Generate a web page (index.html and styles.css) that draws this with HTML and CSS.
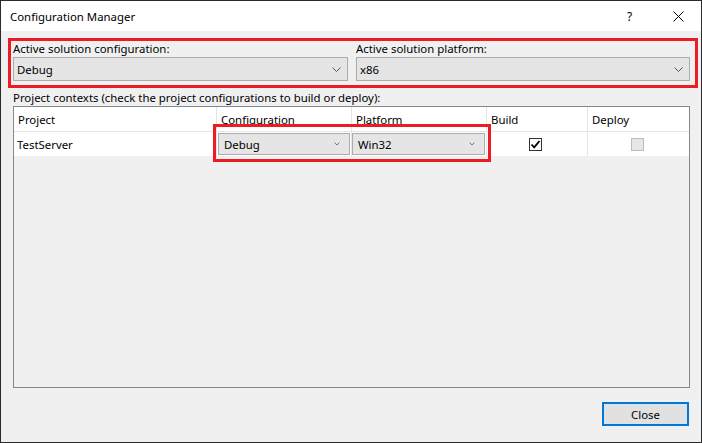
FILE: index.html
```html
<!DOCTYPE html>
<html>
<head>
<meta charset="utf-8">
<link rel="stylesheet" href="styles.css">
</head>
<body>
<div class="window">
  <div class="titlebar">
    <span class="title">Configuration Manager</span>
    <span class="tb-help">?</span>
    <span class="tb-close"><svg width="11" height="11" viewBox="0 0 11 11"><path d="M0.5 0.5 L10.5 10.5 M10.5 0.5 L0.5 10.5" stroke="#000" stroke-width="1" fill="none"/></svg></span>
  </div>
  <div class="content">
    <div class="active-box">
      <div class="field">
        <div class="label">Active solution configuration:</div>
        <div class="combo"><span>Debug</span><svg class="chev" width="9" height="5" viewBox="0 0 9 5"><path d="M0.5 0.5 L4.5 4.5 L8.5 0.5" stroke="#555" fill="none"/></svg></div>
      </div>
      <div class="field">
        <div class="label">Active solution platform:</div>
        <div class="combo"><span>x86</span><svg class="chev" width="9" height="5" viewBox="0 0 9 5"><path d="M0.5 0.5 L4.5 4.5 L8.5 0.5" stroke="#555" fill="none"/></svg></div>
      </div>
    </div>
    <div class="label contexts">Project contexts (check the project configurations to build or deploy):</div>
    <div class="grid-box">
      <div class="row header">
        <div class="cell">Project</div>
        <div class="cell">Configuration</div>
        <div class="cell">Platform</div>
        <div class="cell">Build</div>
        <div class="cell">Deploy</div>
      </div>
      <div class="row data">
        <div class="cell">TestServer</div>
        <div class="cell combo-cell"><div class="mini-combo cfg"><span>Debug</span><svg class="mchev" width="6" height="4" viewBox="0 0 6 4"><path d="M0.5 0.5 L3 3 L5.5 0.5" stroke="#777" fill="none"/></svg></div></div>
        <div class="cell combo-cell"><div class="mini-combo plat"><span>Win32</span><svg class="mchev" width="6" height="4" viewBox="0 0 6 4"><path d="M0.5 0.5 L3 3 L5.5 0.5" stroke="#777" fill="none"/></svg></div></div>
        <div class="cell center"><span class="check on"><svg width="11" height="11" viewBox="0 0 11 11"><path d="M1.5 5.5 L4.2 8.3 L9.5 2" stroke="#000" stroke-width="1.8" fill="none"/></svg></span></div>
        <div class="cell center"><span class="check off"></span></div>
      </div>
      <div class="annot"></div>
    </div>
    <div class="footer">
      <button class="btn">Close</button>
    </div>
  </div>
</div>
</body>
</html>
```
FILE: styles.css
```css
html, body {
  margin: 0;
  padding: 0;
  background: #f0f0f0;
}
body {
  font-family: "Noto Sans", "DejaVu Sans", sans-serif;
  font-size: 11.4px;
  color: #000;
}
.window {
  width: 702px;
  height: 443px;
  box-sizing: border-box;
  border: 1px solid #2b2b2b;
  background: #f0f0f0;
  display: flex;
  flex-direction: column;
}
.titlebar {
  height: 30px;
  background: #fff;
  display: flex;
  align-items: center;
  padding-left: 9px;
}
.title {
  flex: 1;
}
.tb-help {
  width: 12px;
  margin-right: 34px;
  font-size: 12px;
}
.tb-close {
  display: flex;
  margin-right: 17px;
}
.content {
  flex: 1;
  display: flex;
  flex-direction: column;
}
.active-box {
  margin: 7px 3px 0 7px;
  border: 3px solid #ed1c24;
  padding: 0 5px 4px 2px;
  display: grid;
  grid-template-columns: 335px 1fr;
  column-gap: 8px;
}
.label {
  line-height: 16px;
  white-space: nowrap;
}
.combo {
  height: 24px;
  box-sizing: border-box;
  border: 1px solid #acacac;
  background: #e5e5e5;
  display: flex;
  align-items: center;
  padding: 0 6px 0 3px;
}
.combo span {
  flex: 1;
}
.chev {
  display: block;
}
.contexts {
  margin: 2px 0 0 12px;
}
.grid-box {
  position: relative;
  margin: 0 11px 0 12px;
  height: 282px;
  box-sizing: border-box;
  border: 1px solid #828790;
  background: #f0f0f0;
}
.row {
  display: grid;
  grid-template-columns: 203px 135px 135px 101px 1fr;
  background: #fff;
}
.header {
  height: 25px;
  border-bottom: 1px solid #e5e5e5;
  box-sizing: border-box;
}
.data {
  height: 24px;
}
.cell {
  border-right: 1px solid #e5e5e5;
  display: flex;
  align-items: center;
  padding-left: 4px;
  white-space: nowrap;
}
.header .cell {
  padding-top: 1px;
}
.data .cell:first-child {
  padding-left: 3px;
}
.cell:last-child {
  border-right: none;
}
.combo-cell {
  padding-left: 0;
}
.center {
  justify-content: center;
  padding-left: 0;
}
.mini-combo {
  height: 22px;
  box-sizing: border-box;
  border: 1px solid #acacac;
  background: #e5e5e5;
  display: flex;
  align-items: center;
  padding: 0 9px 0 5px;
}
.mini-combo span {
  flex: 1;
}
.mini-combo.cfg {
  width: 132px;
  margin-left: 1px;
}
.mini-combo.plat {
  width: 133px;
}
.mchev {
  display: block;
}
.check {
  width: 13px;
  height: 13px;
  box-sizing: border-box;
  display: flex;
  align-items: center;
  justify-content: center;
}
.check.on {
  border: 1px solid #333;
  background: #fff;
  margin-left: -3px;
}
.check.off {
  border: 1px solid #bcbcbc;
  background: #e6e6e6;
  margin-left: -3px;
}
.annot {
  position: absolute;
  left: 199px;
  top: 17px;
  width: 278px;
  height: 38px;
  box-sizing: border-box;
  border: 3px solid #ed1c24;
}
.footer {
  display: flex;
  justify-content: flex-end;
  padding: 14px 12px 0 0;
}
.btn {
  width: 87px;
  height: 24px;
  box-sizing: border-box;
  border: 2px solid #0078d7;
  background: #e1e1e1;
  font-family: "Noto Sans", "DejaVu Sans", sans-serif;
  font-size: 11.4px;
  color: #000;
  padding: 0;
  margin: 0;
}
```
